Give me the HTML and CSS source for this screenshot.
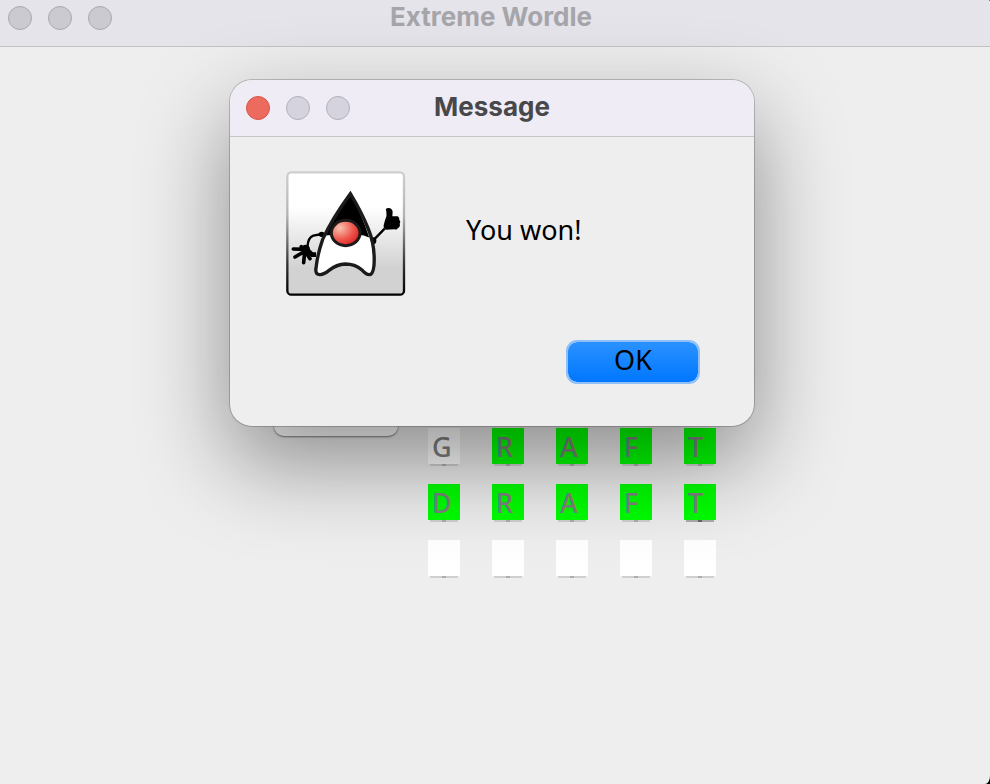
FILE: index.html
```
<!DOCTYPE html>
<html lang="en">
<head>
<meta charset="utf-8">
<title>Extreme Wordle</title>
<link rel="stylesheet" href="styles.css">
</head>
<body>
<div class="window">
  <header class="titlebar">
    <div class="lights">
      <button class="light" aria-label="Close window"></button>
      <button class="light" aria-label="Minimize window"></button>
      <button class="light" aria-label="Zoom window"></button>
    </div>
    <h1 class="title">Extreme Wordle</h1>
  </header>
  <main class="game">
    <button class="guess" aria-label="Guess"></button>
    <div class="board">
      <label class="cell"><input value="G" aria-label="Row 1, letter 1" disabled></label>
      <label class="cell hit"><input value="R" aria-label="Row 1, letter 2" disabled></label>
      <label class="cell hit"><input value="A" aria-label="Row 1, letter 3" disabled></label>
      <label class="cell hit"><input value="F" aria-label="Row 1, letter 4" disabled></label>
      <label class="cell hit"><input value="T" aria-label="Row 1, letter 5" disabled></label>
      <label class="cell hit"><input value="D" aria-label="Row 2, letter 1" disabled></label>
      <label class="cell hit"><input value="R" aria-label="Row 2, letter 2" disabled></label>
      <label class="cell hit"><input value="A" aria-label="Row 2, letter 3" disabled></label>
      <label class="cell hit"><input value="F" aria-label="Row 2, letter 4" disabled></label>
      <label class="cell hit current"><input value="T" aria-label="Row 2, letter 5" disabled></label>
      <label class="cell"><input aria-label="Row 3, letter 1"></label>
      <label class="cell"><input aria-label="Row 3, letter 2"></label>
      <label class="cell"><input aria-label="Row 3, letter 3"></label>
      <label class="cell"><input aria-label="Row 3, letter 4"></label>
      <label class="cell"><input aria-label="Row 3, letter 5"></label>
    </div>
  </main>
  <dialog class="dialog" open aria-labelledby="dialog-title">
    <header class="dialog-bar">
      <div class="lights">
        <button class="light close" aria-label="Close"></button>
        <button class="light" aria-label="Minimize"></button>
        <button class="light" aria-label="Zoom"></button>
      </div>
      <h2 class="title" id="dialog-title">Message</h2>
    </header>
    <div class="dialog-body">
      <div class="message">
        <svg class="duke" viewBox="30 30 360 378" aria-hidden="true">
          <defs>
            <linearGradient id="plate" x1="0" y1="0" x2="0" y2="1">
              <stop offset="0" stop-color="#fff"/>
              <stop offset=".28" stop-color="#fff"/>
              <stop offset=".78" stop-color="#d2d2d2"/>
              <stop offset="1" stop-color="#d2d2d2"/>
            </linearGradient>
            <linearGradient id="rim" x1="0" y1="0" x2="0" y2="1">
              <stop offset="0" stop-color="#cfcfcf"/>
              <stop offset=".35" stop-color="#b4b4b4"/>
              <stop offset=".75" stop-color="#333"/>
              <stop offset="1" stop-color="#000"/>
            </linearGradient>
            <radialGradient id="nose" cx=".3" cy=".3" r=".75">
              <stop offset="0" stop-color="#f9c3b0"/>
              <stop offset=".6" stop-color="#ee5a50"/>
              <stop offset="1" stop-color="#e02325"/>
            </radialGradient>
          </defs>
          <rect x="34" y="37" width="350" height="367" rx="12" fill="url(#plate)" stroke="url(#rim)" stroke-width="7"/>
          <path d="M138 222 L112 227 Q96 232 94 262" fill="none" stroke="#000" stroke-width="7"/>
          <ellipse cx="137" cy="223" rx="9" ry="8"/>
          <path d="M120 284 L108 284 L96 272" fill="none" stroke="#000" stroke-width="14"/>
          <path d="M90 268 L52 267 M86 274 L57 291 M86 276 L83 308 M88 274 L102 296 M89 270 L76 260" fill="none" stroke="#000" stroke-width="11" stroke-linecap="round"/>
          <circle cx="89" cy="267" r="13"/>
          <path d="M291 242 L326 206" fill="none" stroke="#000" stroke-width="7"/>
          <ellipse cx="292" cy="242" rx="9" ry="10"/>
          <path d="M331 154 Q326 144 338 144 Q348 145 350 155 L349 169 L365 169 Q371 173 370 179 Q375 185 371 191 Q374 199 366 204 Q363 210 355 208 L330 209 Q322 207 323 196 L327 181 Q334 168 331 154 Z"/>
          <path d="M223 103 Q179 170 147 226 L262 226 L280 233 Q256 161 223 103 Z"/>
          <path d="M147 230 L165 226 L252 226 L280 233 Q297 268 294 318 Q291 347 277 344 Q268 341 257 328 Q235 310 208 311 Q182 313 159 331 Q138 347 123 340 Q113 332 125 286 Q134 253 147 230 Z" fill="#fff"/>
          <path d="M223 101 Q168 176 140 238 Q124 284 120 325 Q117 345 133 344 Q144 343 159 331 Q182 313 208 312 Q237 312 257 329 Q270 344 280 344 Q291 344 294 316 Q298 258 277 207 Q257 157 223 101 Z" fill="none" stroke="#1c1a1b" stroke-width="10" stroke-linejoin="miter"/>
          <ellipse cx="209" cy="219" rx="43" ry="38" fill="url(#nose)" stroke="#1c1a1b" stroke-width="9"/>
        </svg>
        <p class="text">You won!</p>
      </div>
      <button class="ok">OK</button>
    </div>
  </dialog>
</div>
</body>
</html>
```
FILE: styles.css
```
* { box-sizing: border-box; }

html { background: #000; }

body {
  margin: 0;
  font-family: "Noto Sans", sans-serif;
  font-size: 27px;
  line-height: 32px;
}

button, input {
  margin: 0;
  padding: 0;
  border: 0;
  font: inherit;
  appearance: none;
}

.window {
  position: relative;
  min-height: 100vh;
  overflow: hidden;
  background: #eee;
  border-top-right-radius: 2px;
  border-bottom-right-radius: 5px 8px;
}

.titlebar, .dialog-bar {
  display: grid;
  grid-template-columns: 1fr auto 1fr;
  align-items: center;
}

.titlebar {
  height: 47px;
  padding: 0 16px 10px 8px;
  background: #e5e4ea;
  border-bottom: 1px solid #c2c2c4;
  color: #a6a5aa;
}

.title {
  grid-column: 2;
  margin: 0;
  padding-bottom: 2px;
  font-family: Inter, sans-serif;
  font-size: 26px;
  font-weight: 700;
  line-height: 32px;
}

.lights { display: flex; gap: 16px; }

.light {
  width: 24px;
  height: 24px;
  border: 1px solid #a9a8ae;
  border-radius: 50%;
  background: #cbcad0;
}

.game {
  display: flex;
  justify-content: center;
  align-items: flex-start;
  gap: 30px;
  padding-top: 353px;
}

.guess {
  width: 124px;
  height: 36px;
  border-radius: 10px;
  background: #fff;
  box-shadow: 0 1px 2px #777;
}

.board {
  display: grid;
  grid-template-columns: repeat(5, 32px);
  gap: 18px 32px;
  margin-top: 28px;
}

.cell {
  height: 38px;
  padding-bottom: 2px;
  background:
    linear-gradient(#adadad, #adadad) center bottom / 4px 2px no-repeat,
    linear-gradient(#d0d0d0, #d0d0d0) center bottom / 28px 2px no-repeat;
}

.cell input {
  display: block;
  width: 100%;
  height: 36px;
  padding: 0 0 0 4px;
  border-radius: 0;
  background: #fff;
  color: #808080;
  font-weight: 500;
}

.cell.hit input { background: #00ff00; }

.cell.current {
  background:
    linear-gradient(#666, #666) center bottom / 4px 2px no-repeat,
    linear-gradient(#aaa, #aaa) center bottom / 28px 2px no-repeat;
}

.dialog {
  position: absolute;
  top: 80px;
  left: calc(50% - 265px);
  width: 524px;
  margin: 0;
  padding: 0;
  border: 0;
  border-radius: 22px;
  background: #eee;
  color: #000;
  box-shadow: 0 0 0 1px rgba(0, 0, 0, .2), 0 36px 90px rgba(0, 0, 0, .42);
}

.dialog-bar {
  height: 57px;
  padding: 0 16px;
  border-bottom: 1px solid #c6c5c9;
  border-radius: 22px 22px 0 0;
  background: #efecf6;
  color: #48474a;
}

.dialog-bar .light { background: #d5d3dd; border-color: #b2b0b8; }

.dialog-bar .close { background: #ed6a5e; border-color: #d75448; }

.dialog-body {
  display: flex;
  flex-direction: column;
  padding: 33px 54px 42px 56px;
}

.message {
  display: flex;
  align-items: center;
  gap: 60px;
}

.duke { width: 120px; height: 126px; }

.text { margin: 0; padding-bottom: 6px; }

.ok {
  align-self: flex-end;
  width: 134px;
  height: 44px;
  margin-top: 44px;
  padding-bottom: 4px;
  border: 2px solid #8fbff8;
  border-radius: 11px;
  background: linear-gradient(#2a92ff, #0077ff) padding-box;
  color: #000;
}
```
